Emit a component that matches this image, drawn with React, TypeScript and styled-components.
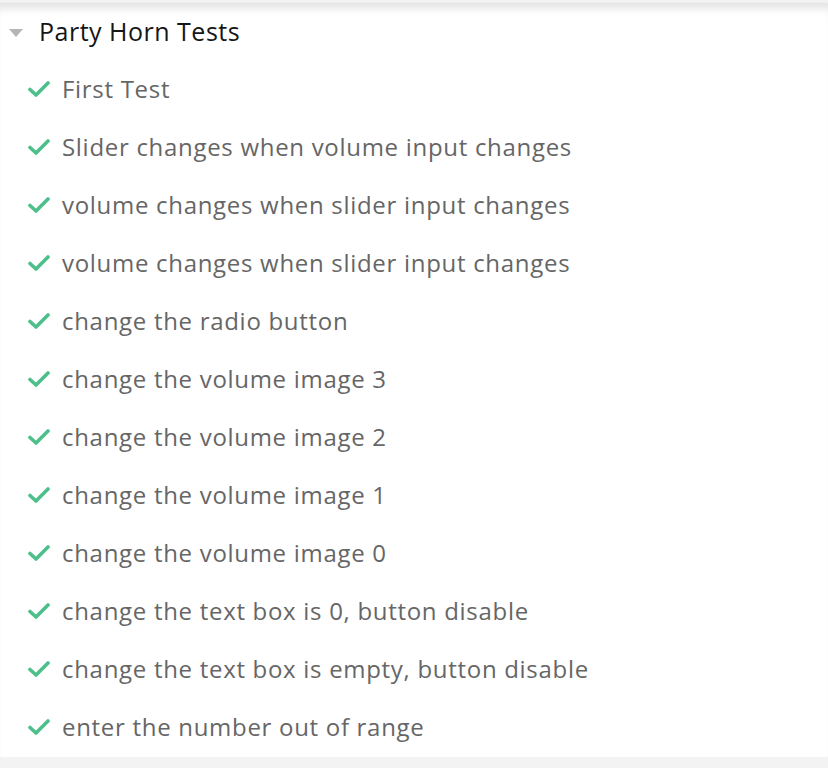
import styled, { createGlobalStyle } from "styled-components";

const GlobalStyle = createGlobalStyle`
  html, body {
    margin: 0;
    padding: 0;
    background: #f3f3f3;
  }
  body {
    font-family: "Open Sans", "Noto Sans", sans-serif;
  }
`;

const Panel = styled.div`
  margin-top: 4px;
  height: 753px;
  background: #fff;
  box-shadow: inset 0 10px 10px -6px rgba(0, 0, 0, 0.12), 0 1px 3px rgba(0, 0, 0, 0.35);
  overflow: hidden;
`;

const Suite = styled.div`
  display: flex;
  align-items: center;
  height: 56px;
  padding-left: 9px;
`;

const Caret = styled.span`
  width: 0;
  height: 0;
  border-left: 7.5px solid transparent;
  border-right: 7.5px solid transparent;
  border-top: 8px solid #b5b5b5;
  margin-right: 16px;
  margin-top: 2px;
`;

const SuiteTitle = styled.span`
  font-size: 25px;
  letter-spacing: 0.5px;
  color: #161616;
  padding-bottom: 2px;
`;

const List = styled.ul`
  list-style: none;
  margin: 0;
  padding: 0;
`;

const Row = styled.li`
  display: flex;
  align-items: center;
  height: 58px;
  padding-left: 28px;
`;

const Check = styled.svg`
  width: 22px;
  height: 16px;
  margin-right: 12px;
  flex-shrink: 0;
`;

const Label = styled.span`
  font-size: 24px;
  letter-spacing: 0.7px;
  color: #666;
  padding-bottom: 2px;
`;

const tests = [
  "First Test",
  "Slider changes when volume input changes",
  "volume changes when slider input changes",
  "volume changes when slider input changes",
  "change the radio button",
  "change the volume image 3",
  "change the volume image 2",
  "change the volume image 1",
  "change the volume image 0",
  "change the text box is 0, button disable",
  "change the text box is empty, button disable",
  "enter the number out of range",
];

export default function App() {
  return (
    <>
      <GlobalStyle />
      <Panel>
        <Suite>
          <Caret />
          <SuiteTitle>Party Horn Tests</SuiteTitle>
        </Suite>
        <List>
          {tests.map((t, i) => (
            <Row key={i}>
              <Check viewBox="0 0 22 16">
                <path d="M2 8.5 L8 14 L20 2" fill="none" stroke="#4cbf8a" strokeWidth="3.6" strokeLinecap="round" strokeLinejoin="round" />
              </Check>
              <Label>{t}</Label>
            </Row>
          ))}
        </List>
      </Panel>
    </>
  );
}
